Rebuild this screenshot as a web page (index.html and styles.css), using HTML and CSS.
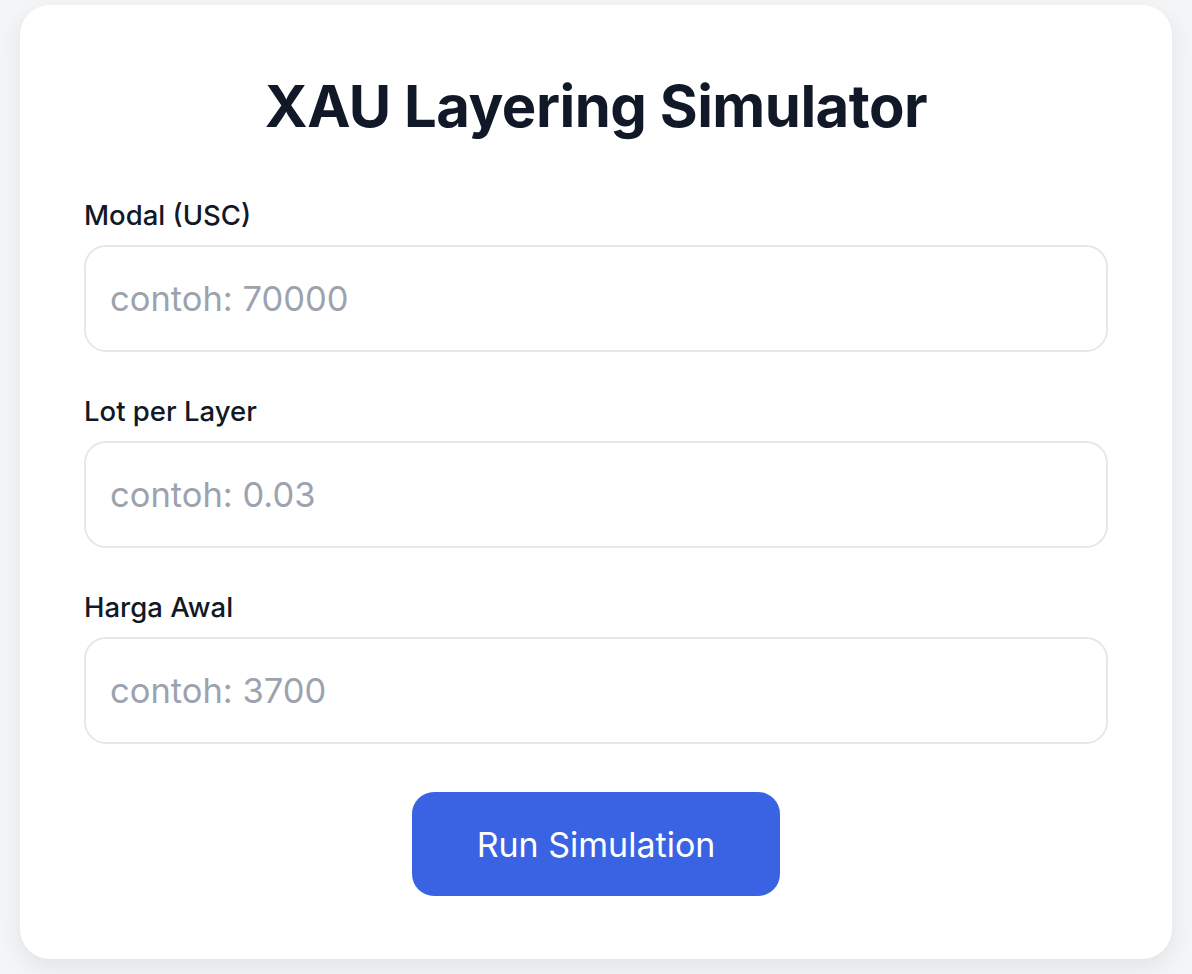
FILE: index.html
```html
<!DOCTYPE html>
<html lang="id">
<head>
<meta charset="utf-8">
<title>XAU Layering Simulator</title>
<link rel="stylesheet" href="styles.css">
</head>
<body>
<main class="card">
  <h1 class="title">XAU Layering Simulator</h1>
  <div class="field">
    <label class="label" for="modal">Modal (USC)</label>
    <input class="input" id="modal" type="text" placeholder="contoh: 70000">
  </div>
  <div class="field">
    <label class="label" for="lot">Lot per Layer</label>
    <input class="input" id="lot" type="text" placeholder="contoh: 0.03">
  </div>
  <div class="field field-last">
    <label class="label" for="harga">Harga Awal</label>
    <input class="input" id="harga" type="text" placeholder="contoh: 3700">
  </div>
  <div class="actions">
    <button class="btn" type="button">Run Simulation</button>
  </div>
</main>
</body>
</html>
```

FILE: styles.css
```css
* { box-sizing: border-box; }

html, body {
  margin: 0;
  height: 100%;
}

body {
  background: #f4f5f7;
  padding: 5px 20px 0;
  font-family: Inter, "Noto Sans", sans-serif;
  color: #111827;
}

.card {
  background: #ffffff;
  border-radius: 30px;
  padding: 66px 64px 63px;
  box-shadow: 0 8px 24px rgba(0, 0, 0, 0.08);
  display: flex;
  flex-direction: column;
}

.title {
  margin: 0 0 56px;
  font-size: 58px;
  line-height: 70px;
  font-weight: 700;
  text-align: center;
  color: #111827;
  letter-spacing: -0.5px;
}

.field {
  display: flex;
  flex-direction: column;
  margin-bottom: 41px;
}

.field-last {
  margin-bottom: 48px;
}

.label {
  font-size: 27.5px;
  line-height: 36px;
  font-weight: 500;
  margin-bottom: 12px;
  color: #111827;
}

.input {
  height: 107px;
  border: 2px solid #e5e7eb;
  border-radius: 22px;
  padding: 0 24px;
  font-family: inherit;
  font-size: 34.5px;
  color: #111827;
  background: #fff;
  outline: none;
}

.input::placeholder {
  color: #9ca3af;
}

.actions {
  display: flex;
  justify-content: center;
}

.btn {
  width: 368px;
  height: 104px;
  border: none;
  border-radius: 22px;
  background: #3a63e3;
  color: #ffffff;
  font-family: inherit;
  font-size: 34px;
  font-weight: 400;
  cursor: pointer;
}
```
